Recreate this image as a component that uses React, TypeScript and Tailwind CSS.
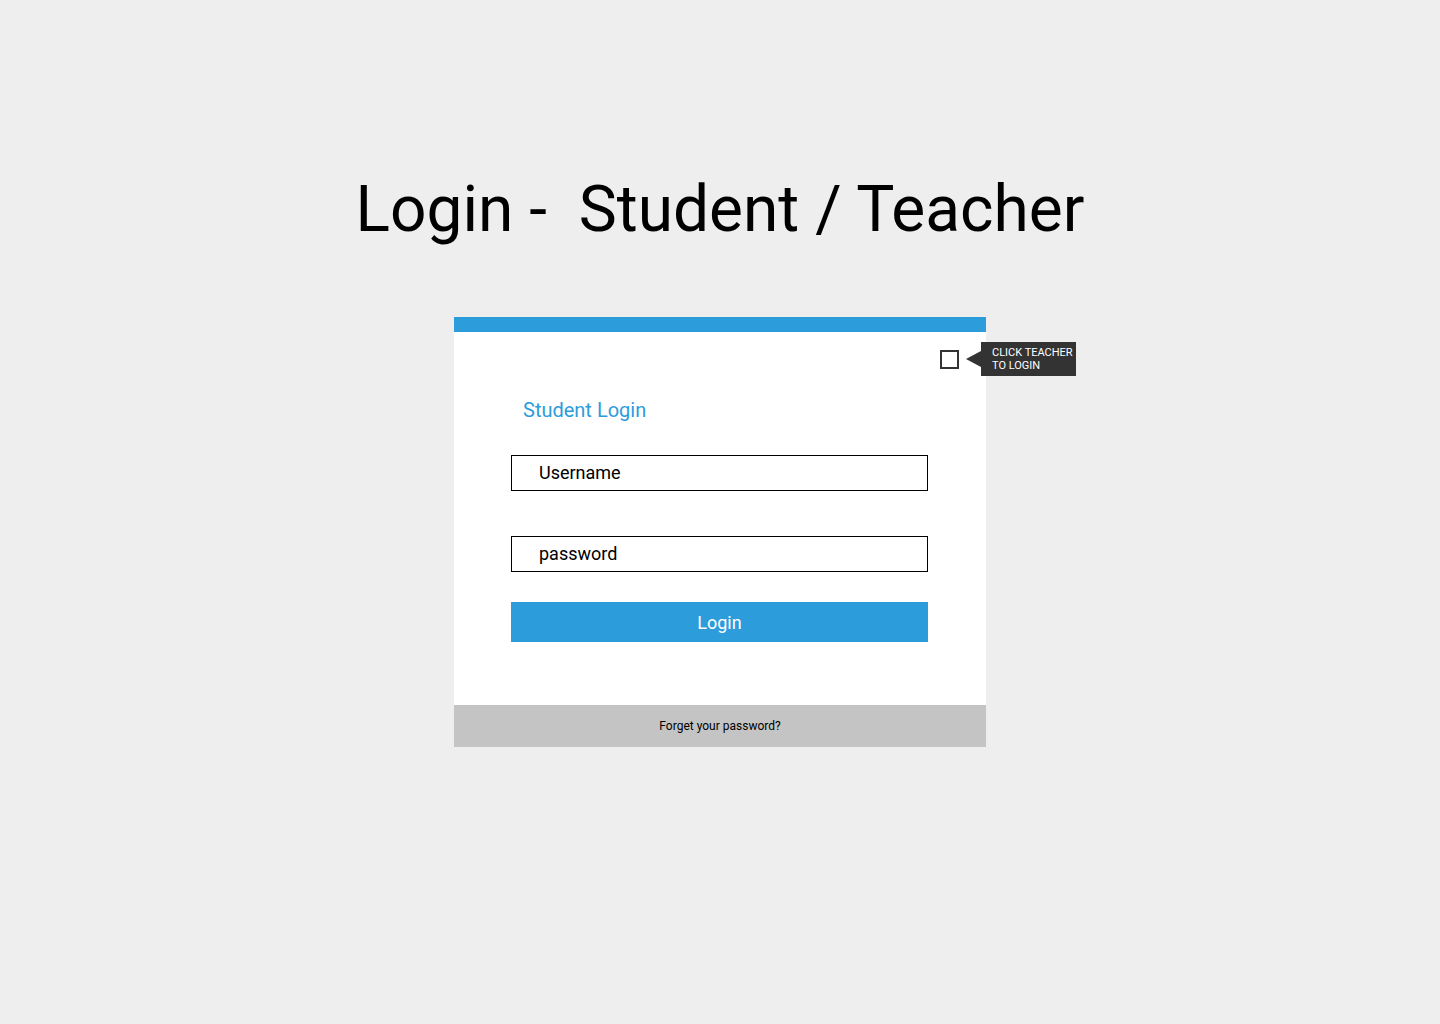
import React from 'react';

const App: React.FC = () => {
  return (
    <div className="min-h-[1024px] w-full bg-[#eeeeee] flex flex-col items-center font-['Roboto','Liberation_Sans',sans-serif]">
      {/* Page title */}
      <h1 className="mt-[172px] text-[64px] leading-[75px] text-black font-normal whitespace-pre">
        Login -  Student / Teacher
      </h1>

      {/* Login card */}
      <div className="mt-[70px] w-[532px] relative">
        <div className="h-[15px] bg-[#2d9cdb]"></div>

        <div className="bg-white h-[373px] relative pl-[57px] pr-[58px] pt-[66px]">
          {/* Teacher toggle + tooltip */}
          <div className="absolute left-[486px] top-[10px] flex items-center">
            <div className="w-[19px] h-[19px] border-2 border-[#333333] bg-white"></div>
            <div className="ml-[7px] w-0 h-0 border-y-[8px] border-y-transparent border-r-[15px] border-r-[#333333]"></div>
            <div className="bg-[#333333] text-white text-[11px] leading-[13px] w-[95px] h-[34px] pl-[11px] pt-[4px] uppercase">
              Click teacher<br />to login
            </div>
          </div>

          <div className="pl-[12px] text-[20px] leading-[24px] text-[#2d9cdb]">Student Login</div>

          <div className="mt-[33px] h-[36px] border border-black flex items-center pl-[27px] pb-[1px] text-[18px] text-black">
            Username
          </div>
          <div className="mt-[45px] h-[36px] border border-black flex items-center pl-[27px] pb-[1px] text-[18px] text-black">
            password
          </div>
          <button className="mt-[30px] w-full h-[40px] bg-[#2d9cdb] text-white text-[18px] flex items-center justify-center">
            Login
          </button>
        </div>

        <div className="h-[42px] bg-[#c4c4c4] flex items-center justify-center text-[12px] text-black">
          Forget your password?
        </div>
      </div>
    </div>
  );
};

export default App;
